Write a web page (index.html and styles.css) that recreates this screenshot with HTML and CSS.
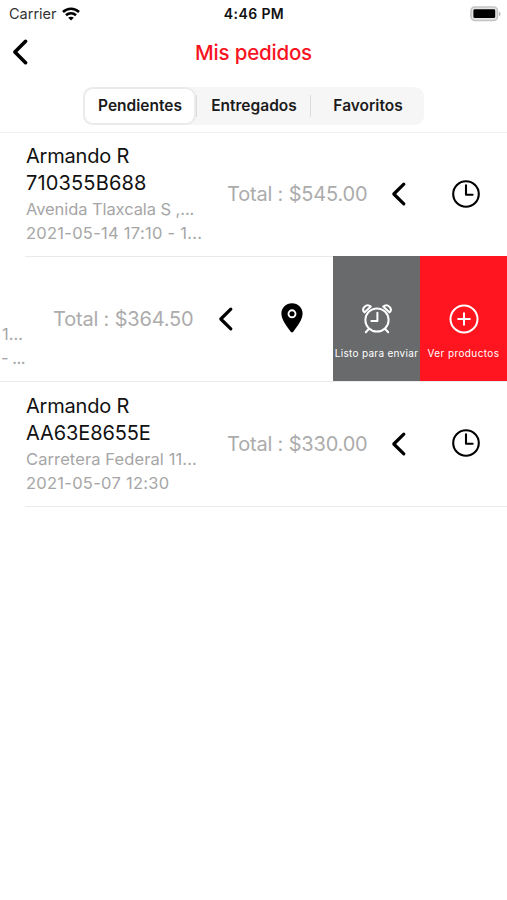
FILE: index.html
```
<!DOCTYPE html>
<html lang="es">
<head>
    <meta charset="UTF-8">
    <meta name="viewport" content="width=device-width, initial-scale=1.0">
    <title>Mis pedidos</title>
    <link rel="stylesheet" href="styles.css">
</head>
<body>
    <!-- Status bar -->
    <div class="status-bar">
        <div class="carrier">
            <span class="carrier-name">Carrier</span>
            <svg class="wifi" width="18" height="14" viewBox="0 0 18 14" fill="none" stroke="#000" stroke-width="2.6">
                <path d="M1 5C5.5.6 12.5.6 17 5"/>
                <path d="M4 8.3C6.8 5.6 11.2 5.6 14 8.3"/>
                <path d="M9 13.6L6.2 10.8C7.8 9.4 10.2 9.4 11.8 10.8Z" fill="#000" stroke="none"/>
            </svg>
        </div>
        <span class="time">4:46 PM</span>
        <svg class="battery" width="31" height="16" viewBox="0 0 31 16">
            <rect x="1" y="1" width="26.5" height="13.5" rx="4" fill="#e4e4e4" stroke="#c4c4c4" stroke-width="1.6"/>
            <rect x="3.4" y="3.3" width="21.8" height="8.8" rx="1.4" fill="#000"/>
            <path d="M29 5.4C31 6.4 31 9.2 29 10.2Z" fill="#b5b5b5"/>
        </svg>
    </div>

    <!-- Navigation -->
    <header class="nav">
        <svg class="back" width="18" height="28" viewBox="0 0 18 28" fill="none" stroke="#000" stroke-width="3.6" stroke-linecap="round" stroke-linejoin="round">
            <path d="M13.6 3.3L2.9 14L13.6 24.7"/>
        </svg>
        <h1 class="title">Mis pedidos</h1>
    </header>

    <!-- Tabs -->
    <div class="tabs-bar">
        <div class="tabs">
            <button class="tab active">Pendientes</button>
            <button class="tab middle">Entregados</button>
            <button class="tab last">Favoritos</button>
        </div>
    </div>

    <!-- Orders -->
    <main class="orders">
        <div class="order first">
            <div class="info">
                <p class="name">Armando R</p>
                <p class="code">710355B688</p>
                <p class="detail address">Avenida Tlaxcala S ,...</p>
                <p class="detail date">2021-05-14 17:10 - 1...</p>
            </div>
            <span class="total">Total : $545.00</span>
            <svg class="arrow" width="16" height="26" viewBox="0 0 16 26">
                <path d="M12.8 3.2L2.8 13L12.8 22.8"/>
            </svg>
            <svg class="state" width="30" height="30" viewBox="0 0 30 30">
                <circle cx="15" cy="15" r="12.8"/>
                <path d="M15 6.4V15.8H21.6"/>
            </svg>
        </div>

        <!-- Row swiped to the left, with its actions showing -->
        <div class="order swiped">
            <div class="info">
                <p class="detail">1...</p>
                <p class="detail dash">- ...</p>
            </div>
            <span class="total">Total : $364.50</span>
            <svg class="arrow" width="16" height="26" viewBox="0 0 16 26">
                <path d="M12.8 3.2L2.8 13L12.8 22.8"/>
            </svg>
            <svg class="pin" width="22" height="30" viewBox="0 0 22 30">
                <path d="M11 .3C5 .3.4 4.7.4 10.5C.4 16.5 5.5 23 9.7 28.7Q11 30.2 12.3 28.7C16.5 23 21.6 16.5 21.6 10.5C21.6 4.7 17 .3 11 .3Z" fill="#000"/>
                <circle cx="11" cy="10.8" r="3.5" fill="none" stroke="#fff" stroke-width="1.9"/>
            </svg>
            <div class="actions">
                <div class="action ready">
                    <svg width="30" height="30" viewBox="0 0 30 30" fill="none" stroke="#fff" stroke-width="2" stroke-linecap="round" stroke-linejoin="round">
                        <circle cx="15" cy="16" r="11.6"/>
                        <path d="M15.4 8.8V17H9.4"/>
                        <path d="M2.4 8.4C-1.2 4.6 4.4-1 8.8 2.6ZM27.6 8.4C31.2 4.6 25.6-1 21.2 2.6Z"/>
                        <path d="M6.8 25L3.8 28.2M23.2 25L26.2 28.2"/>
                    </svg>
                    <span>Listo para enviar</span>
                </div>
                <div class="action products">
                    <svg width="30" height="30" viewBox="0 0 30 30" fill="none" stroke="#fff" stroke-width="2" stroke-linecap="round">
                        <circle cx="15" cy="15" r="13.5"/>
                        <path d="M15 9.2V20.8M9.2 15H20.8"/>
                    </svg>
                    <span>Ver productos</span>
                </div>
            </div>
        </div>

        <div class="order">
            <div class="info">
                <p class="name">Armando R</p>
                <p class="code letters">AA63E8655E</p>
                <p class="detail federal">Carretera Federal 11...</p>
                <p class="detail date">2021-05-07 12:30</p>
            </div>
            <span class="total">Total : $330.00</span>
            <svg class="arrow" width="16" height="26" viewBox="0 0 16 26">
                <path d="M12.8 3.2L2.8 13L12.8 22.8"/>
            </svg>
            <svg class="state" width="30" height="30" viewBox="0 0 30 30">
                <circle cx="15" cy="15" r="12.8"/>
                <path d="M15 6.4V15.8H21.6"/>
            </svg>
        </div>
    </main>
</body>
</html>
```
FILE: styles.css
```
* {
    box-sizing: border-box;
}

body {
    margin: 0;
    background-color: #fff;
    color: #111;
    font-family: Inter, "Liberation Sans", sans-serif;
    overflow: hidden;
}

svg {
    display: block;
    flex: none;
}

p {
    margin: 0;
    white-space: nowrap;
}

/* Status bar */
.status-bar {
    display: grid;
    grid-template-columns: 1fr auto 1fr;
    align-items: center;
    height: 27px;
    padding: 0 6px 0 9px;
}

.carrier {
    display: flex;
    align-items: center;
    gap: 5px;
}

.carrier-name {
    font-size: 14.5px;
    color: #333;
}

.time {
    margin-right: 2px;
    font-size: 14px;
    font-weight: 600;
    letter-spacing: 0.4px;
}

.battery {
    justify-self: end;
}

/* Navigation */
.nav {
    display: grid;
    grid-template-columns: 1fr auto 1fr;
    align-items: center;
    height: 50px;
    padding: 0 12px;
}

.title {
    margin: 0;
    font-size: 20.5px;
    font-weight: 550;
    letter-spacing: -0.2px;
    color: #f8141f;
}

/* Tabs */
.tabs-bar {
    display: flex;
    justify-content: center;
    height: 56px;
    padding-top: 10px;
    border-bottom: 1px solid #efefef;
}

.tabs {
    display: grid;
    grid-template-columns: 113px 115px 113px;
    align-items: center;
    width: 341px;
    height: 38px;
    border-radius: 9px;
    background-color: #f6f6f6;
}

.tab {
    height: 22px;
    padding: 0 0 2px 1px;
    border: none;
    background: none;
    color: #1b1b1b;
    font-family: inherit;
    font-size: 15.5px;
    font-weight: 600;
}

.tab.active {
    height: 38px;
    border: 2px solid #ebebeb;
    border-radius: 10px;
    background-color: #fff;
}

.tab.middle {
    border-left: 1px solid #dcdcdc;
    border-right: 1px solid #dcdcdc;
}

/* Orders */
.order {
    position: relative;
    display: flex;
    align-items: center;
    height: 125px;
    padding: 0 0 2px 26px;
}

.order.first {
    height: 124px;
}

/* The divider starts where the text starts */
.order::after {
    content: "";
    position: absolute;
    left: 25px;
    right: 0;
    bottom: 0;
    height: 1px;
    background-color: #eaeaea;
}

.info {
    width: 201px;
}

.name,
.code {
    font-size: 20px;
    line-height: 27px;
}

.name {
    letter-spacing: -0.2px;
}

.code {
    letter-spacing: 0.15px;
}

.code.letters {
    letter-spacing: -0.1px;
}

.detail {
    font-size: 16.5px;
    line-height: 24px;
    color: #a6a6a6;
}

.address {
    letter-spacing: -0.08px;
}

.federal {
    letter-spacing: 0.1px;
}

.date {
    letter-spacing: 0.27px;
}

.total {
    width: 164px;
    font-size: 20px;
    letter-spacing: -0.18px;
    color: #acacac;
    white-space: nowrap;
}

.arrow {
    fill: none;
    stroke: #000;
    stroke-width: 3.2;
    stroke-linecap: round;
    stroke-linejoin: round;
}

.state {
    margin: 0 0 1px 44px;
    fill: none;
    stroke: #000;
    stroke-width: 2.1;
    stroke-linecap: round;
    stroke-linejoin: round;
}

/* Swiped row */
.order.swiped {
    padding-left: 2px;
}

.order.swiped::after {
    left: 0;
}

.swiped .info {
    width: 51px;
    padding-top: 54px;
}

.dash {
    margin-left: -1px;
    letter-spacing: -0.5px;
}

.swiped .arrow {
    margin-left: 1px;
}

.pin {
    margin: 0 0 2px 47px;
}

.actions {
    z-index: 1;
    display: flex;
    align-self: stretch;
    margin: -1px 0 -1px auto;
}

.action {
    display: flex;
    flex-direction: column;
    align-items: center;
    width: 87px;
    padding-top: 48px;
    color: #fff;
    font-size: 10px;
    white-space: nowrap;
}

.action span {
    margin-top: 13px;
    letter-spacing: 0.3px;
}

.ready {
    background-color: #686a6b;
}

.products {
    background-color: #ff151f;
}

.products span {
    letter-spacing: 0.4px;
}
```
